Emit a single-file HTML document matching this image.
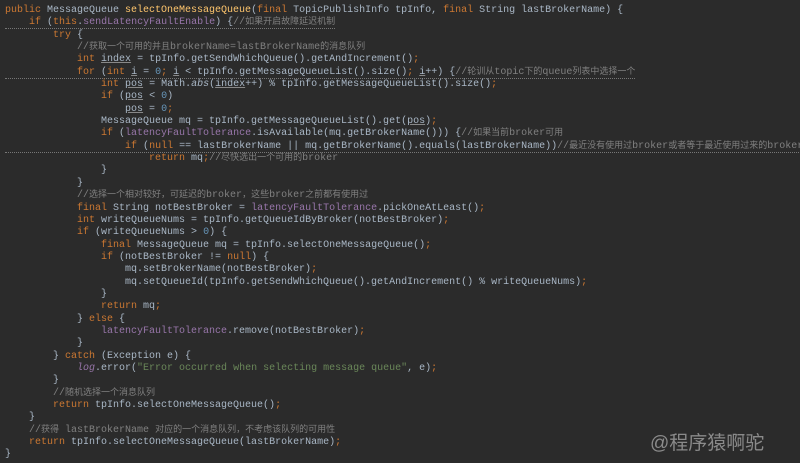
<!DOCTYPE html>
<html><head><meta charset="utf-8"><style>
html,body{margin:0;padding:0;background:#2b2b2b;width:800px;height:463px;overflow:hidden}
pre{margin:0;padding:5px 0 0 5px;font-family:"Liberation Mono","Noto Sans CJK SC",monospace;font-size:10px;line-height:12.35px;color:#a9b7c6;white-space:pre}
.k{color:#cc7832}.m{color:#ffc66d}.f{color:#9876aa}.c{color:#808080}.n{color:#6897bb}.s{color:#6a8759}.i{font-style:italic}
.z{font-size:9px;line-height:1}
.u{text-decoration:underline;text-decoration-color:#888}
.d{display:inline-block;border-bottom:1px dotted #777;line-height:11px;vertical-align:top}
.w{position:absolute;left:650px;top:428px;font-family:"Liberation Sans","Noto Sans CJK SC",sans-serif;font-size:19px;color:#8a8a8a}
</style></head><body>
<pre><span class="k">public</span> MessageQueue <span class="m">selectOneMessageQueue</span>(<span class="k">final</span> TopicPublishInfo tpInfo, <span class="k">final</span> String lastBrokerName) {
<span class="d">    <span class="k">if</span> (<span class="k">this</span>.<span class="f">sendLatencyFaultEnable</span>) {<span class="c">//<span class="z">如果开启故障延迟机制</span></span></span>
        <span class="k">try</span> {
            <span class="c">//<span class="z">获取一个可用的并且</span>brokerName=lastBrokerName<span class="z">的消息队列</span></span>
            <span class="k">int</span> <span class="u">index</span> = tpInfo.getSendWhichQueue().getAndIncrement()<span class="k">;</span>
<span class="d">            <span class="k">for</span> (<span class="k">int</span> <span class="u">i</span> = <span class="n">0</span><span class="k">;</span> <span class="u">i</span> &lt; tpInfo.getMessageQueueList().size()<span class="k">;</span> <span class="u">i</span>++) {<span class="c">//<span class="z">轮训从</span>topic<span class="z">下的</span>queue<span class="z">列表中选择一个</span></span></span>
                <span class="k">int</span> <span class="u">pos</span> = Math.<span class="i">abs</span>(<span class="u">index</span>++) % tpInfo.getMessageQueueList().size()<span class="k">;</span>
                <span class="k">if</span> (<span class="u">pos</span> &lt; <span class="n">0</span>)
                    <span class="u">pos</span> = <span class="n">0</span><span class="k">;</span>
                MessageQueue mq = tpInfo.getMessageQueueList().get(<span class="u">pos</span>)<span class="k">;</span>
                <span class="k">if</span> (<span class="f">latencyFaultTolerance</span>.isAvailable(mq.getBrokerName())) {<span class="c">//<span class="z">如果当前</span>broker<span class="z">可用</span></span>
<span class="d">                    <span class="k">if</span> (<span class="k">null</span> == lastBrokerName || mq.getBrokerName().equals(lastBrokerName))<span class="c">//<span class="z">最近没有使用过</span>broker<span class="z">或者等于最近使用过来的</span>broker</span></span>
                        <span class="k">return</span> mq<span class="k">;</span><span class="c">//<span class="z">尽快选出一个可用的</span>broker</span>
                }
            }
            <span class="c">//<span class="z">选择一个相对较好，可延迟的</span>broker<span class="z">，这些</span>broker<span class="z">之前都有使用过</span></span>
            <span class="k">final</span> String notBestBroker = <span class="f">latencyFaultTolerance</span>.pickOneAtLeast()<span class="k">;</span>
            <span class="k">int</span> writeQueueNums = tpInfo.getQueueIdByBroker(notBestBroker)<span class="k">;</span>
            <span class="k">if</span> (writeQueueNums &gt; <span class="n">0</span>) {
                <span class="k">final</span> MessageQueue mq = tpInfo.selectOneMessageQueue()<span class="k">;</span>
                <span class="k">if</span> (notBestBroker != <span class="k">null</span>) {
                    mq.setBrokerName(notBestBroker)<span class="k">;</span>
                    mq.setQueueId(tpInfo.getSendWhichQueue().getAndIncrement() % writeQueueNums)<span class="k">;</span>
                }
                <span class="k">return</span> mq<span class="k">;</span>
            } <span class="k">else</span> {
                <span class="f">latencyFaultTolerance</span>.remove(notBestBroker)<span class="k">;</span>
            }
        } <span class="k">catch</span> (Exception e) {
            <span class="f i">log</span>.error(<span class="s">"Error occurred when selecting message queue"</span>, e)<span class="k">;</span>
        }
        <span class="c">//<span class="z">随机选择一个消息队列</span></span>
        <span class="k">return</span> tpInfo.selectOneMessageQueue()<span class="k">;</span>
    }
    <span class="c">//<span class="z">获得</span> lastBrokerName <span class="z">对应的一个消息队列，不考虑该队列的可用性</span></span>
    <span class="k">return</span> tpInfo.selectOneMessageQueue(lastBrokerName)<span class="k">;</span>
}</pre>
<div class="w">@程序猿啊驼</div>
</body></html>
